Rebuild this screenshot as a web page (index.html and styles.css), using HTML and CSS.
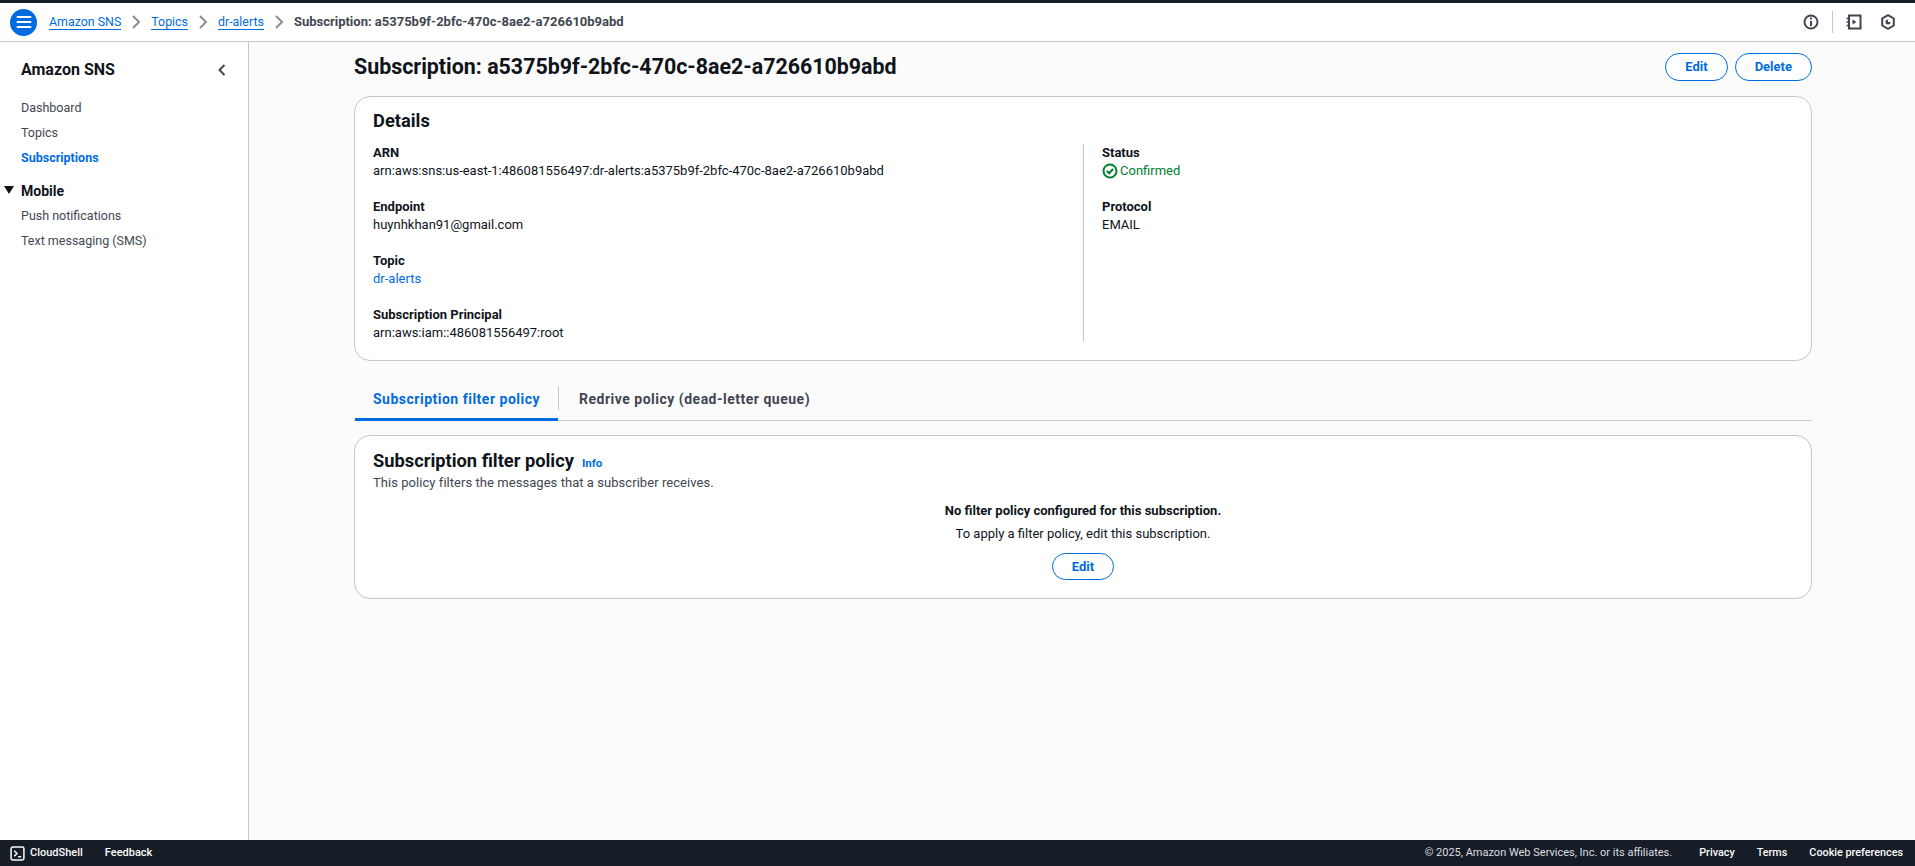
FILE: index.html
```html
<!DOCTYPE html>
<html lang="en">
<head>
<meta charset="utf-8">
<title>Subscription</title>
<link rel="stylesheet" href="styles.css">
</head>
<body>
<div class="strip"></div>
<header class="topbar">
  <button class="menu" aria-label="Menu"><svg width="16" height="14" viewBox="0 0 16 14"><path d="M1.5 2h13M1.5 7h13M1.5 12h13" stroke="#fff" stroke-width="2" stroke-linecap="round" fill="none"/></svg></button>
  <nav class="crumbs">
    <a href="#">Amazon SNS</a>
    <svg class="sep" width="12" height="16" viewBox="0 0 12 16"><path d="M3 2l6 6-6 6" stroke="#8c8c94" stroke-width="2" fill="none"/></svg>
    <a href="#">Topics</a>
    <svg class="sep" width="12" height="16" viewBox="0 0 12 16"><path d="M3 2l6 6-6 6" stroke="#8c8c94" stroke-width="2" fill="none"/></svg>
    <a href="#">dr-alerts</a>
    <svg class="sep" width="12" height="16" viewBox="0 0 12 16"><path d="M3 2l6 6-6 6" stroke="#8c8c94" stroke-width="2" fill="none"/></svg>
    <span class="current">Subscription: a5375b9f-2bfc-470c-8ae2-a726610b9abd</span>
  </nav>
  <div class="tools">
    <svg width="16" height="16" viewBox="0 0 16 16" fill="none" stroke="#424650" stroke-width="2"><circle cx="8" cy="8" r="6.5"/><path d="M8 7v5" /><path d="M8 3.6v2"/></svg>
    <span class="tooldiv"></span>
    <svg width="16" height="16" viewBox="0 0 16 16" fill="none" stroke="#424650" stroke-width="2"><path d="M3 1.5h11.5v13H3z"/><path d="M0.5 4.5h3.5M0.5 8h3.5M0.5 11.5h3.5" stroke-width="1.6"/><path d="M6.5 5.5l4 2.500-4 2.500z" fill="#424650" stroke="none"/></svg>
    <svg class="tool-last" width="16" height="16" viewBox="0 0 16 16" fill="none" stroke="#424650" stroke-width="2"><path d="M8 1.200l5.800 3.300v7L8 14.800l-5.800-3.300v-7z"/><path d="M8 5.500a2.500 2.500 0 1 0 2.500 2.500H8z" fill="#424650" stroke="none"/></svg>
  </div>
</header>
<div class="shell">
  <aside class="side">
    <div class="side-head"><span class="side-title">Amazon SNS</span>
      <svg width="16" height="16" viewBox="0 0 16 16"><path d="M10.500 3l-5 5 5 5" stroke="#424650" stroke-width="2" fill="none"/></svg></div>
    <ul class="side-list">
      <li><a href="#">Dashboard</a></li>
      <li><a href="#">Topics</a></li>
      <li><a href="#" class="active">Subscriptions</a></li>
    </ul>
    <div class="side-group"><span class="tri"></span>Mobile</div>
    <ul class="side-list sub">
      <li><a href="#">Push notifications</a></li>
      <li><a href="#">Text messaging (SMS)</a></li>
    </ul>
  </aside>
  <main class="main">
    <div class="page-head">
      <h1>Subscription: a5375b9f-2bfc-470c-8ae2-a726610b9abd</h1>
      <div class="actions"><button class="btn">Edit</button><button class="btn">Delete</button></div>
    </div>
    <section class="card details">
      <h2>Details</h2>
      <div class="cols">
        <div class="col left">
          <div class="kv"><div class="k">ARN</div><div class="v">arn:aws:sns:us-east-1:486081556497:dr-alerts:a5375b9f-2bfc-470c-8ae2-a726610b9abd</div></div>
          <div class="kv"><div class="k">Endpoint</div><div class="v">huynhkhan91@gmail.com</div></div>
          <div class="kv"><div class="k">Topic</div><div class="v"><a href="#">dr-alerts</a></div></div>
          <div class="kv"><div class="k">Subscription Principal</div><div class="v">arn:aws:iam::486081556497:root</div></div>
        </div>
        <div class="col right">
          <div class="kv"><div class="k">Status</div><div class="v ok"><svg width="16" height="16" viewBox="0 0 16 16" fill="none" stroke="#00802f" stroke-width="2"><circle cx="8" cy="8" r="6.500"/><path d="M4.800 8l2.300 2.300 4-4.300"/></svg>Confirmed</div></div>
          <div class="kv"><div class="k">Protocol</div><div class="v">EMAIL</div></div>
        </div>
      </div>
    </section>
    <div class="tabs">
      <div class="tab on">Subscription filter policy</div>
      <div class="tab-wrap"><span class="tabdiv"></span><div class="tab">Redrive policy (dead-letter queue)</div></div>
    </div>
    <section class="card policy">
      <div class="policy-title"><h2>Subscription filter policy</h2><a href="#" class="info">Info</a></div>
      <p class="desc">This policy filters the messages that a subscriber receives.</p>
      <div class="empty">
        <div class="empty-t">No filter policy configured for this subscription.</div>
        <div class="empty-s">To apply a filter policy, edit this subscription.</div>
        <button class="btn">Edit</button>
      </div>
    </section>
  </main>
</div>
<footer class="foot">
  <div class="foot-left">
    <span class="cs"><svg width="15" height="15" viewBox="0 0 14 14" fill="none" stroke="#fbfbfb" stroke-width="1.400"><rect x="1" y="1" width="12" height="12" rx="1.500"/><path d="M4 4.500l2.500 2.500L4 9.500M7.500 10H10.500"/></svg>CloudShell</span>
    <span>Feedback</span>
  </div>
  <div class="foot-right">
    <span class="copy">© 2025, Amazon Web Services, Inc. or its affiliates.</span>
    <span>Privacy</span><span>Terms</span><span>Cookie preferences</span>
  </div>
</footer>
</body>
</html>
```
FILE: styles.css
```css
* { box-sizing: border-box; }
html, body { height: 100%; }
body { margin: 0; height: 100vh; display: flex; flex-direction: column; overflow: hidden; font-family: Roboto, "Noto Sans", sans-serif; font-size: 13px; line-height: 18px; color: #0f141a; background: #fff; }
a { color: #006ce0; text-decoration: none; }
.strip { height: 3px; background: #161d26; flex: none; }
.topbar { height: 39px; flex: none; display: flex; align-items: center; padding: 0 19px 0 10px; border-bottom: 1px solid #c6c6cd; background: #fff; }
.menu { width: 27px; height: 27px; border-radius: 50%; border: 0; background: #006ce0; display: flex; align-items: center; justify-content: center; padding: 0; margin-right: 12px; }
.crumbs { display: flex; align-items: center; gap: 9px; flex: 1; }
.crumbs a { border-bottom: 1px solid #006ce0; line-height: 15px; font-size: 12.400px; }
.sep { flex: none; }
.current { color: #424650; font-weight: 700; }
.tools { display: flex; align-items: center; gap: 13px; }
.tooldiv { width: 1px; height: 22px; background: #c6c6cd; }
.tool-last { margin-left: 5px; }
.shell { flex: 1; min-height: 0; display: flex; }
.side { width: 249px; flex: none; border-right: 1px solid #c6c6cd; background: #fff; }
.side-head { display: flex; justify-content: space-between; align-items: center; padding: 12px 18px 0 21px; height: 43px; }
.side-title { font-size: 16px; font-weight: 700; }
.side-list { list-style: none; margin: 0; padding: 0 0 0 21px; font-size: 12.500px; }
.side-list li { height: 25px; display: flex; align-items: center; }
.side-list { margin-top: 10px; }
.side-list a { color: #424650; }
.side-list a.active { color: #006ce0; font-weight: 700; }
.side-group { position: relative; font-weight: 700; font-size: 14px; padding-left: 21px; margin-top: 10px; line-height: 22px; }
.tri { position: absolute; left: 4px; top: 6px; border-left: 5px solid transparent; border-right: 5px solid transparent; border-top: 8px solid #0f141a; }
.side-list.sub { margin-top: 1px; }
.main { flex: 1; min-width: 0; background: #fbfbfb; padding: 11px 103px 0 105px; }
.page-head { display: flex; justify-content: space-between; align-items: center; height: 28px; margin-bottom: 15px; }
h1 { margin: 0; font-size: 21.400px; line-height: 28px; font-weight: 700; }
.actions { display: flex; gap: 7px; }
.btn { height: 28px; padding: 0 19px; border-radius: 14px; border: 1px solid #006ce0; background: #fff; color: #006ce0; font: 700 13px/18px Roboto, sans-serif; }
.card { background: #fff; border: 1px solid #c6c6cd; border-radius: 16px; padding: 13px 18px; }
h2 { margin: 0; font-size: 18.300px; line-height: 22px; font-weight: 700; }
.details { height: 265px; }
.cols { display: flex; margin-top: 12px; }
.col.left { width: 711px; padding-right: 20px; border-right: 1px solid #c6c6cd; height: 197px; }
.col.right { padding-left: 18px; }
.kv { height: 54px; }
.k { font-weight: 700; }
.ok { color: #00802f; display: flex; align-items: center; gap: 2px; }
.tabs { display: flex; height: 37px; margin-top: 23px; border-bottom: 1px solid #c6c6cd; }
.tab { font-weight: 700; padding: 0 20px; color: #424650; height: 36px; line-height: 30px; font-size: 14px; letter-spacing: .5px; white-space: nowrap; }
.tab.on { color: #006ce0; border-bottom: 3px solid #006ce0; height: 37px; margin-left: 1px; width: 203px; padding: 0 18px; }
.tab-wrap { display: flex; }
.tabdiv { width: 1px; height: 24px; background: #c6c6cd; margin-top: 2px; }
.policy { margin-top: 14px; height: 164px; position: relative; padding-top: 14px; }
.policy-title { display: flex; align-items: baseline; gap: 8px; }
.info { font-size: 11.500px; font-weight: 700; }
.desc { margin: 2px 0 0; font-size: 13px; letter-spacing: .05px; color: #424650; line-height: 18px; }
.empty { text-align: center; margin-top: 10px; }
.empty-t { font-weight: 700; }
.empty-s { margin-top: 5px; }
.empty .btn { margin-top: 10px; height: 27px; }
.foot { height: 26px; flex: none; background: #161d26; color: #fbfbfb; display: flex; justify-content: space-between; align-items: center; padding: 0 12px 0 10px; font-size: 11px; font-weight: 500; }
.foot-left { display: flex; gap: 22px; }
.cs { display: flex; align-items: center; gap: 5px; }
.foot-right { display: flex; gap: 22px; font-size: 10.800px; }
.copy { color: #dedee3; font-weight: 400; margin-right: 5px; font-size: 11px; }
```
